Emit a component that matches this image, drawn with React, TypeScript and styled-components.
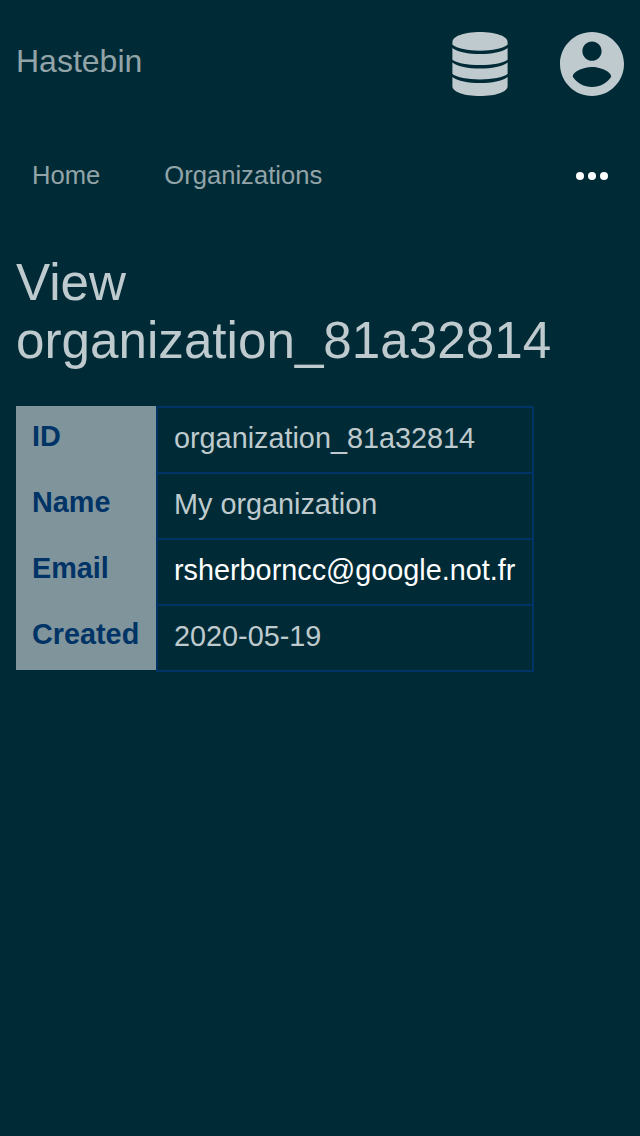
import React from "react";
import styled, { createGlobalStyle } from "styled-components";

const GlobalStyle = createGlobalStyle`
  * { box-sizing: border-box; }
  body {
    margin: 0;
    background: #002b36;
    color: #becacd;
    font-family: "Liberation Sans", Arial, sans-serif;
  }
`;
const Page = styled.div`
  min-height: 1136px;
  background: #002b36;
`;
const Header = styled.header`
  display: flex;
  align-items: center;
  height: 128px;
  padding: 0 16px;
`;
const Brand = styled.a`
  flex: 1;
  font-size: 32px;
  line-height: 36px;
  padding-bottom: 6px;
  color: #93a4a9;
`;
const Actions = styled.div`
  display: flex;
  align-items: center;
  gap: 48px;
`;
const Icon = styled.svg`
  display: block;
  width: 64px;
  height: 64px;
  fill: currentColor;
`;
const Nav = styled.nav`
  display: flex;
  align-items: center;
  height: 96px;
  padding: 0 32px;
  gap: 64px;
`;
const NavLink = styled.a`
  font-size: 25.6px;
  line-height: 30px;
  padding-bottom: 2px;
  color: #93a4a9;
`;
const More = styled.div`
  display: flex;
  gap: 4px;
  margin-left: auto;
`;
const Dot = styled.span`
  width: 8px;
  height: 8px;
  border-radius: 50%;
  background: #fff;
`;
const Main = styled.main`
  padding: 30px 16px;
`;
const Title = styled.h1`
  margin: 0 0 36px;
  font-size: 51.2px;
  line-height: 58px;
  font-weight: 400;
`;
const Details = styled.dl`
  display: grid;
  grid-template-columns: 140px 378px;
  width: max-content;
  margin: 0;
  font-size: 28.8px;
  line-height: 32px;
`;
const Label = styled.dt`
  height: 66px;
  padding: 14px 16px;
  background: #80959b;
  color: #003366;
  font-weight: 700;
`;
const Value = styled.dd<{ $link?: boolean }>`
  height: 66px;
  margin: 0;
  padding: 14px 16px;
  border: 2px solid #003366;
  border-bottom-width: 0;
  color: ${(p) => (p.$link ? "#fff" : "inherit")};
  &:last-child {
    height: 68px;
    margin-bottom: -2px;
    border-bottom-width: 2px;
  }
`;

const fields = [
  { label: "ID", value: "organization_81a32814" },
  { label: "Name", value: "My organization" },
  { label: "Email", value: "rsherborncc@google.not.fr", link: true },
  { label: "Created", value: "2020-05-19" },
];

export default function App() {
  return (
    <Page>
      <GlobalStyle />
      <Header>
        <Brand>Hastebin</Brand>
        <Actions>
          <Icon viewBox="0 0 64 64">
            <path d="M32 0C16 0 4.400 4.400 4.400 10v2.800C9 16.500 19.500 18.700 32 18.700S55 16.500 59.600 12.800V10C59.600 4.400 48 0 32 0Z" />
            <path d="M4.400 16C10 20 20 22.100 32 22.100S54 20 59.600 16v11.700C55 31.200 44.500 33 32 33S9 31.200 4.400 27.700Z" />
            <path d="M4.400 30.500C10 34.500 20 36.600 32 36.600s22-2.100 27.600-6.100v11.600C55 45.600 44.500 47.400 32 47.400S9 45.600 4.400 42.100Z" />
            <path d="M4.400 45C10 49 20 51.100 32 51.100S54 49 59.600 45v9.200C59.600 59.700 48 64 32 64S4.400 59.700 4.400 54.200Z" />
          </Icon>
          <Icon viewBox="2 2 20 20">
            <path d="M12 2C6.480 2 2 6.480 2 12s4.480 10 10 10 10-4.480 10-10S17.520 2 12 2zm0 3c1.660 0 3 1.340 3 3s-1.340 3-3 3-3-1.340-3-3 1.340-3 3-3zm0 14.200c-2.500 0-4.710-1.280-6-3.220.03-1.990 4-3.080 6-3.080 1.990 0 5.970 1.090 6 3.080-1.290 1.940-3.500 3.220-6 3.220z" />
          </Icon>
        </Actions>
      </Header>
      <Nav>
        <NavLink>Home</NavLink>
        <NavLink>Organizations</NavLink>
        <More><Dot /><Dot /><Dot /></More>
      </Nav>
      <Main>
        <Title>View organization_81a32814</Title>
        <Details>
          {fields.map((f) => (
            <React.Fragment key={f.label}>
              <Label>{f.label}</Label>
              <Value $link={f.link}>{f.value}</Value>
            </React.Fragment>
          ))}
        </Details>
      </Main>
    </Page>
  );
}
